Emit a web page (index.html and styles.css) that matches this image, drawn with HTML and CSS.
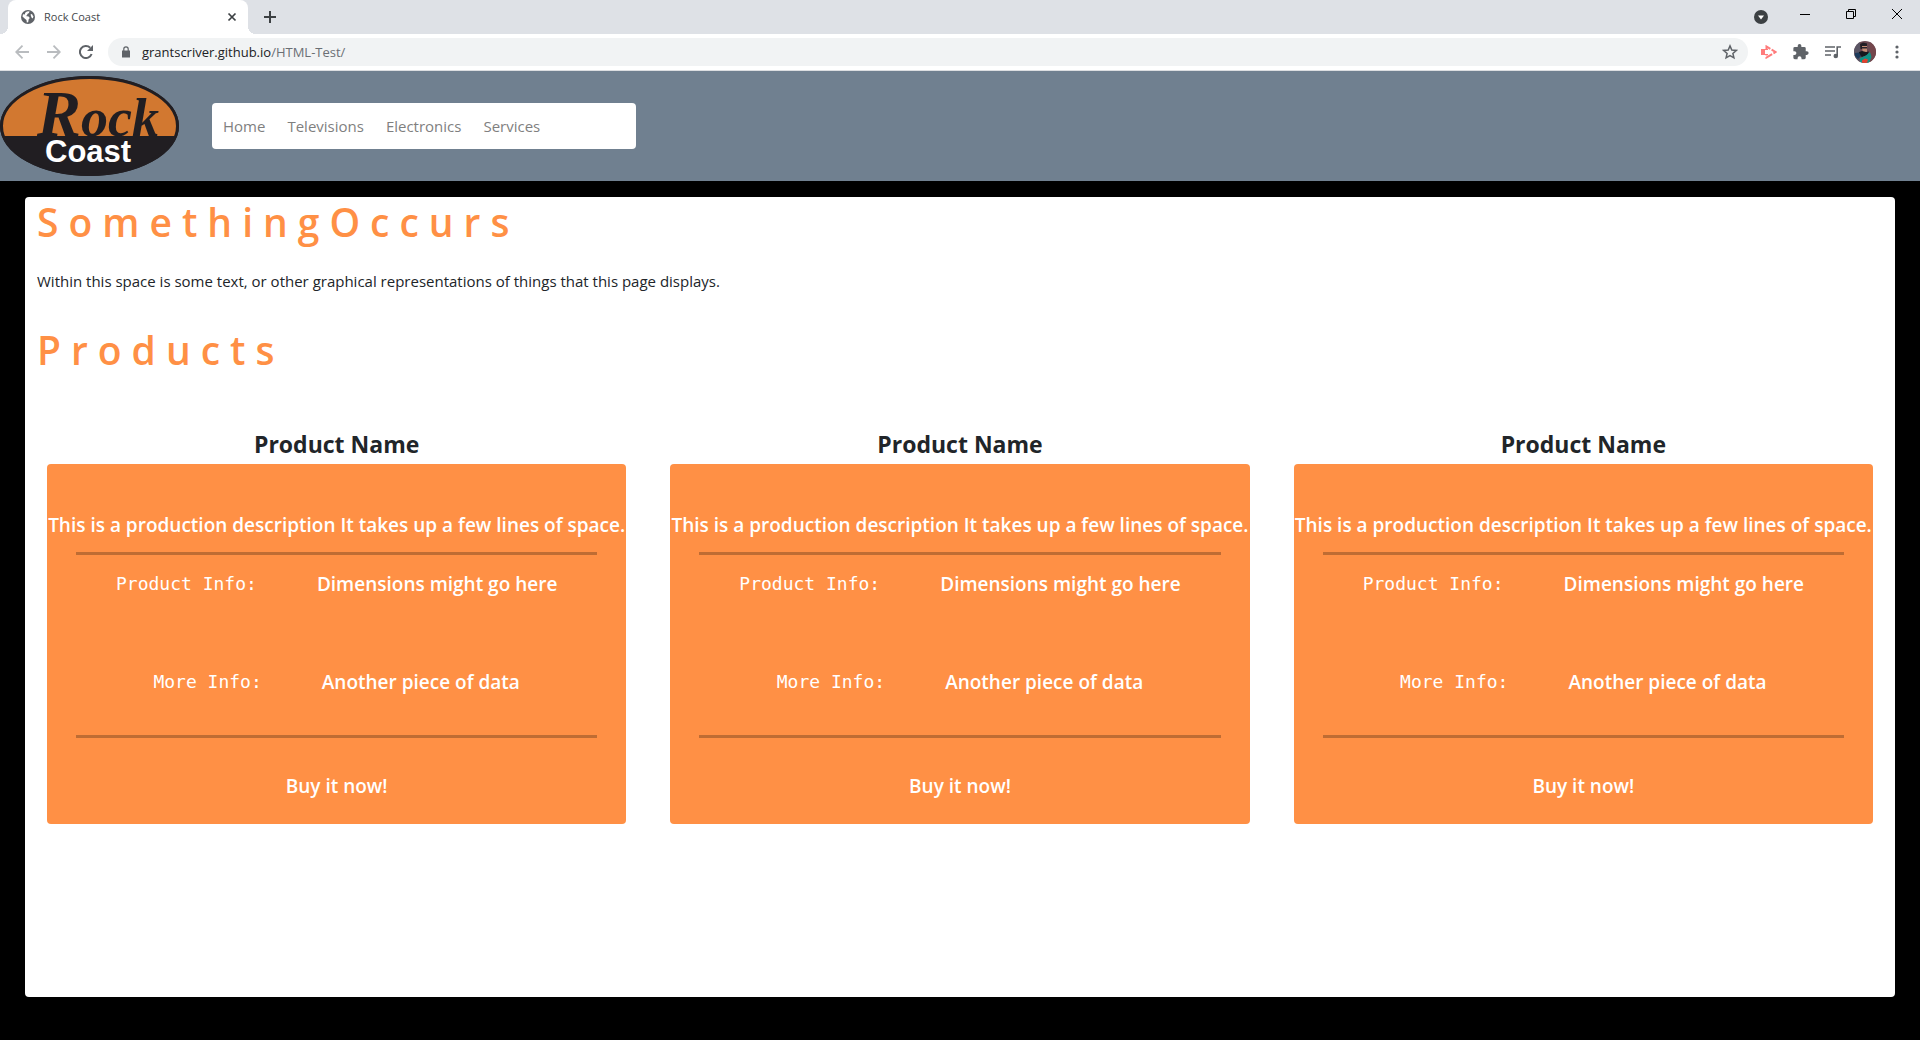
FILE: index.html
```html
<!DOCTYPE html>
<html lang="en">
<head>
<meta charset="utf-8">
<title>Rock Coast</title>
<link rel="stylesheet" href="styles.css">
</head>
<body>
<div class="browser">
  <div class="tabstrip">
    <div class="tab">
      <svg class="globe" width="16" height="16" viewBox="0 0 16 16"><circle cx="8" cy="8" r="7" fill="#5f6368"/><path d="M7 2.6 9.500 2.300 9 4 7.300 5 7.200 6.300 5.600 7 8.600 7.400 9.800 9 8.600 10.600 8.200 13.300 6.800 13.400 6.500 11 4.600 9.600 2.500 7.400 3 5.200 4.800 5.400 5.200 3.800Z" fill="#fff"/><path d="M10.500 5.500 12 5 13.300 7.500 12.800 9.500 11.500 8.500Z" fill="#fff"/></svg>
      <span class="tab-title">Rock Coast</span>
      <button class="icon-btn" aria-label="Close tab"><svg width="10" height="10" viewBox="0 0 10 10"><path d="M1.500 1.500 8.500 8.500M8.500 1.500 1.500 8.500" stroke="#3c4043" stroke-width="1.700"/></svg></button>
    </div>
    <button class="icon-btn new-tab" aria-label="New tab"><svg width="12" height="12" viewBox="0 0 12 12"><path d="M6 0V12M0 6H12" stroke="#3c4043" stroke-width="2"/></svg></button>
    <div class="strip-end">
      <button class="icon-btn" aria-label="Search tabs"><svg width="14" height="20" viewBox="0 0 14 20"><circle cx="7" cy="13" r="7" fill="#3c4043"/><path d="M4 11.500H10L7 15.500Z" fill="#fff"/></svg></button>
      <div class="window-buttons">
        <button class="icon-btn" aria-label="Minimize"><svg width="10" height="10" viewBox="0 0 10 10"><path d="M0 5.500H10" stroke="#000"/></svg></button>
        <button class="icon-btn" aria-label="Restore"><svg width="10" height="10" viewBox="0 0 10 10"><path d="M.5 2.500H7.500V9.500H.5ZM2.500 2.500V.5H9.500V7.500H7.500" fill="none" stroke="#000"/></svg></button>
        <button class="icon-btn" aria-label="Close"><svg width="10" height="10" viewBox="0 0 10 10"><path d="M0 0 10 10M10 0 0 10" stroke="#000"/></svg></button>
      </div>
    </div>
  </div>
  <div class="toolbar">
    <div class="history">
      <button class="icon-btn" aria-label="Back"><svg width="14" height="14" viewBox="0 0 14 14"><path d="M14 7H1M7.500 .7 1.200 7 7.500 13.300" fill="none" stroke="#b9bcbf" stroke-width="1.800"/></svg></button>
      <button class="icon-btn" aria-label="Forward"><svg width="14" height="14" viewBox="0 0 14 14"><path d="M0 7H13M6.500 .7 12.800 7 6.500 13.300" fill="none" stroke="#b9bcbf" stroke-width="1.800"/></svg></button>
      <button class="icon-btn" aria-label="Reload"><svg width="14" height="14" viewBox="0 0 14 14"><path d="M12.600 9A6 6 0 1 1 11.200 2.800" fill="none" stroke="#5f6368" stroke-width="2"/><path d="M14 0V6H8Z" fill="#5f6368"/></svg></button>
    </div>
    <div class="omnibox">
      <svg width="8" height="12" viewBox="0 0 8 12"><path d="M0 4.500H8V11.500H0Z" fill="#5f6368"/><path d="M1.800 5V3A2.200 2.200 0 0 1 6.200 3V5" fill="none" stroke="#5f6368" stroke-width="1.200"/></svg>
      <span class="url">grantscriver.github.io<span class="path">/HTML-Test/</span></span>
      <button class="icon-btn" aria-label="Bookmark"><svg width="16" height="16" viewBox="0 0 16 16"><path d="M8 1.900 9.800 6 14.300 6.400 10.900 9.400 11.900 13.800 8 11.500 4.100 13.800 5.100 9.400 1.700 6.400 6.200 6Z" fill="none" stroke="#5f6368" stroke-width="1.500"/></svg></button>
    </div>
    <div class="tools">
      <button class="icon-btn" aria-label="Screen recorder"><svg width="16" height="14" viewBox="0 0 16 14"><path d="M0 4H4V10H0Z" fill="#ff7b7b"/><path d="M5.500 4V1.500L14.500 7 5.500 12.500V10" fill="none" stroke="#ff7b7b" stroke-width="2" stroke-dasharray="7 1.500"/><path d="M4 4.500H7M4 9.500H7" stroke="#ff7b7b"/></svg></button>
      <button class="icon-btn" aria-label="Extensions"><svg width="16" height="16" viewBox="2 1 21 22"><path d="M20.500 11H19V7a2 2 0 0 0-2-2h-4V3.500a2.500 2.500 0 0 0-5 0V5H4a2 2 0 0 0-2 2v3.800h1.500a2.700 2.700 0 0 1 0 5.400H2V20a2 2 0 0 0 2 2h3.800v-1.500a2.700 2.700 0 0 1 5.400 0V22H17a2 2 0 0 0 2-2v-4h1.500a2.500 2.500 0 0 0 0-5Z" fill="#5f6368"/></svg></button>
      <button class="icon-btn" aria-label="Media"><svg width="16" height="14" viewBox="0 0 16 14"><path d="M0 2H10M0 6H10M0 10H6" stroke="#5f6368" stroke-width="1.600"/><path d="M12.200 11V2H16" fill="none" stroke="#5f6368" stroke-width="1.600"/><circle cx="10.800" cy="11" r="2.300" fill="#5f6368"/></svg></button>
      <button class="icon-btn" aria-label="Profile"><svg width="22" height="22" viewBox="0 0 22 22"><clipPath id="face"><circle cx="11" cy="11" r="11"/></clipPath><g clip-path="url(#face)"><path d="M0 0H22V22H0Z" fill="#6a4a52"/><path d="M0 0H6V22H0Z" fill="#5a5564"/><path d="M16 0H22V22H16Z" fill="#74464c"/><path d="M7.500 4H13V12H9Z" fill="#c48d75"/><path d="M6 3 9 1.500 13 2.500V5H8V8H6.500Z" fill="#211f25"/><path d="M8 6H13V7.500H8Z" fill="#27242b"/><path d="M5 11 8 10 12 11 15 10.500 13.500 14 8 16 5 14Z" fill="#15191e"/><path d="M1 12 5 11.500 7 15 4 18 1 15Z" fill="#1d3b5c"/><path d="M6 17 12 14.500 16 11 17.500 16 15 22H6Z" fill="#109286"/><path d="M8 19.500 11 17.500 14 18.500 13 22H8Z" fill="#e2412f"/></g></svg></button>
      <button class="icon-btn" aria-label="Menu"><svg width="4" height="14" viewBox="0 0 4 14"><circle cx="2" cy="2" r="1.600" fill="#5f6368"/><circle cx="2" cy="7" r="1.600" fill="#5f6368"/><circle cx="2" cy="12" r="1.600" fill="#5f6368"/></svg></button>
    </div>
  </div>
</div>
<header class="site-header">
  <svg class="logo" width="179" height="100" viewBox="0 0 179 100" role="img" aria-label="Rock Coast">
    <clipPath id="oval"><ellipse cx="89.500" cy="50" rx="88.500" ry="49"/></clipPath>
    <ellipse cx="89.500" cy="50" rx="89.500" ry="50" fill="#211e22"/>
    <g clip-path="url(#oval)"><path d="M3 2H176V60H3Z" fill="#d27830"/></g>
    <ellipse cx="89.500" cy="50" rx="88" ry="48.500" fill="none" stroke="#211e22" stroke-width="3"/>
    <text class="logo-script" x="37" y="60"><tspan class="logo-cap">R</tspan>ock</text>
    <text class="logo-name" x="45" y="86">Coast</text>
  </svg>
  <nav class="nav">
    <a href="#">Home</a>
    <a href="#">Televisions</a>
    <a href="#">Electronics</a>
    <a href="#">Services</a>
  </nav>
</header>
<main class="panel">
  <h1>SomethingOccurs</h1>
  <p class="intro">Within this space is some text, or other graphical representations of things that this page displays.</p>
  <h1>Products</h1>
  <div class="products">
    <section class="product">
      <h2>Product Name</h2>
      <div class="card">
        <p>This is a production description It takes up a few lines of space.</p>
        <hr>
        <dl>
          <div class="info"><dt>Product Info:</dt><dd>Dimensions might go here</dd></div>
          <div class="info"><dt>More Info:</dt><dd>Another piece of data</dd></div>
        </dl>
        <hr>
        <a class="buy" href="#">Buy it now!</a>
      </div>
    </section>
    <section class="product">
      <h2>Product Name</h2>
      <div class="card">
        <p>This is a production description It takes up a few lines of space.</p>
        <hr>
        <dl>
          <div class="info"><dt>Product Info:</dt><dd>Dimensions might go here</dd></div>
          <div class="info"><dt>More Info:</dt><dd>Another piece of data</dd></div>
        </dl>
        <hr>
        <a class="buy" href="#">Buy it now!</a>
      </div>
    </section>
    <section class="product">
      <h2>Product Name</h2>
      <div class="card">
        <p>This is a production description It takes up a few lines of space.</p>
        <hr>
        <dl>
          <div class="info"><dt>Product Info:</dt><dd>Dimensions might go here</dd></div>
          <div class="info"><dt>More Info:</dt><dd>Another piece of data</dd></div>
        </dl>
        <hr>
        <a class="buy" href="#">Buy it now!</a>
      </div>
    </section>
  </div>
</main>
</body>
</html>
```
FILE: styles.css
```css
* { box-sizing: border-box; }
body {
  margin: 0;
  background: #000;
  color: #212529;
  font: 15px/24px "Open Sans", "Noto Sans", sans-serif;
}
h1, h2, p, dl, dd { margin: 0; }
a { text-decoration: none; }
svg { display: block; flex: none; }

.icon-btn {
  display: flex;
  justify-content: center;
  padding: 0;
  border: 0;
  background: none;
}

/* Browser window */
.browser {
  background: #fff;
  border-bottom: 1px solid #dcdee1;
}
.tabstrip {
  display: flex;
  align-items: center;
  height: 34px;
  padding-left: 8px;
  background: #dee1e6;
}
.tab {
  position: relative;
  display: flex;
  align-items: center;
  width: 240px;
  height: 34px;
  padding: 0 11px 0 12px;
  border-radius: 8px 8px 0 0;
  background: #fff;
}
.tab::before,
.tab::after {
  content: "";
  position: absolute;
  bottom: 0;
  width: 8px;
  height: 8px;
}
.tab::before {
  left: -8px;
  background: radial-gradient(circle at 0 0, #dee1e6 8px, #fff 8px);
}
.tab::after {
  right: -8px;
  background: radial-gradient(circle at 100% 0, #dee1e6 8px, #fff 8px);
}
.tab-title {
  flex: 1;
  padding-left: 8px;
  color: #45484b;
  font-size: 11px;
}
.new-tab { margin-left: 16px; }
.strip-end {
  display: flex;
  align-items: center;
  gap: 32px;
  height: 28px;
  margin: 0 18px 6px auto;
}
.window-buttons {
  display: flex;
  gap: 36px;
}
.toolbar {
  display: flex;
  align-items: center;
  height: 36px;
  padding: 0 7px 0 15px;
}
.history {
  display: flex;
  gap: 18px;
  margin-right: 15px;
}
.omnibox {
  display: flex;
  flex: 1;
  align-items: center;
  height: 28px;
  padding: 0 10px 0 14px;
  border-radius: 14px;
  background: #f1f3f4;
}
.url {
  flex: 1;
  padding-left: 12px;
  color: #202124;
  font-size: 13px;
}
.path { color: #6b6f74; }
.tools {
  display: grid;
  grid-template-columns: repeat(5, 32px);
  align-items: center;
  padding-left: 5px;
}

/* Site header */
.site-header {
  display: flex;
  align-items: center;
  gap: 33px;
  height: 110px;
  background: #708090;
}
.logo-script {
  fill: #211e22;
  font: italic 700 54px "Liberation Sans Narrow", "Liberation Serif", serif;
}
.logo-cap { font-size: 66px; }
.logo-name {
  fill: #fff;
  font: 700 31px "Liberation Sans", sans-serif;
}
.nav {
  display: flex;
  align-items: center;
  gap: 22px;
  width: 424px;
  height: 46px;
  padding: 0 11px;
  border-radius: 4px;
  background: #fff;
}
.nav a { color: #7f7f7f; }

/* Content */
.panel {
  min-height: 800px;
  margin: 16px 25px 43px;
  border-radius: 4px;
  background: #fff;
}
h1 {
  padding: 0 12px;
  color: #ff9045;
  font-size: 39px;
  font-weight: 600;
  line-height: 50px;
  letter-spacing: 10px;
}
.intro {
  padding: 22px 12px 32px;
}
.products {
  display: grid;
  grid-template-columns: repeat(3, 1fr);
  padding-top: 53px;
}
.product { padding: 0 22px; }
h2 {
  padding-bottom: 4px;
  font-size: 23px;
  font-weight: 700;
  line-height: 32px;
  text-align: center;
}
.card {
  display: flex;
  flex-direction: column;
  align-items: center;
  padding: 46px 0 23px;
  border-radius: 4px;
  background: #ff9045;
  color: #fff;
  font-size: 19px;
  font-weight: 600;
  line-height: 30px;
}
.card p { white-space: nowrap; }
.card hr {
  width: 90%;
  height: 3px;
  margin: 12px 0 14px;
  border: 0;
  background: rgba(0, 0, 0, 0.25);
}
.card dl {
  display: grid;
  gap: 68px;
  padding-bottom: 26px;
}
.info {
  display: flex;
  justify-content: center;
  gap: 60px;
}
dt { font: 400 18px/30px "DejaVu Sans Mono", monospace; }
.buy {
  margin-top: 19px;
  color: #fff;
}
```
